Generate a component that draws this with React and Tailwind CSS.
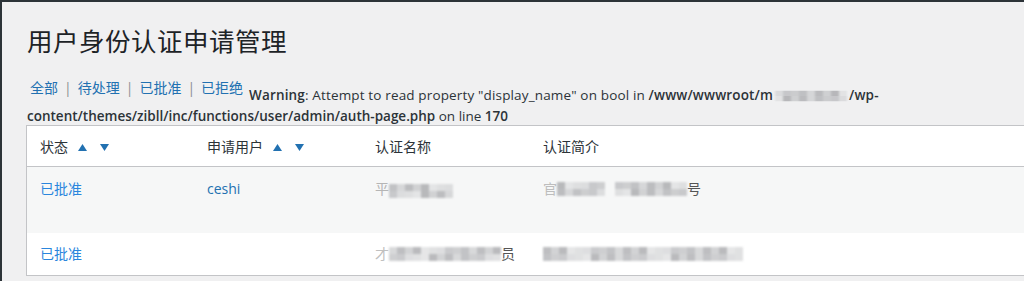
import React from "react";

const shades = [
  "bg-[#c8c9cb]", "bg-[#b4b5b8]", "bg-[#d6d7d9]", "bg-[#a9aaad]", "bg-[#cfd0d2]",
  "bg-[#bdbec1]", "bg-[#e0e1e2]", "bg-[#aeafb2]", "bg-[#c3c4c6]", "bg-[#d9dadb]",
];

function Mosaic({ n, seed = 0, className = "" }) {
  const cells = [];
  for (let i = 0; i < n; i++) {
    const top = shades[(i * 3 + seed) % shades.length];
    const bot = shades[(i * 7 + seed + 4) % shades.length];
    cells.push(
      <div key={i} className="flex flex-col">
        <div className={"w-[8px] h-[7px] " + top} />
        <div className={"w-[8px] h-[7px] " + bot} />
      </div>
    );
  }
  return <div className={"flex opacity-80 blur-[1px] " + className}>{cells}</div>;
}

function SortArrows() {
  return (
    <span className="inline-flex items-center gap-[13px] ml-[10px] text-[#2271b1]">
      <svg width="9" height="7" viewBox="0 0 9 7"><path d="M4.5 0L9 7H0z" fill="currentColor" /></svg>
      <svg width="9" height="7" viewBox="0 0 9 7"><path d="M0 0H9L4.5 7z" fill="currentColor" /></svg>
    </span>
  );
}

export default function App() {
  const cjk = "font-['Open_Sans','Noto_Sans_CJK_SC',sans-serif]";
  return (
    <div className={"w-[1024px] h-[281px] overflow-hidden bg-[#f0f0f1] border-t-[2px] border-l-[2px] border-[#2c3338] " + cjk}>
      <div className="pl-[24px]">
        <h1 className="pl-[1px] pt-[21px] text-[25.5px] leading-[36px] text-[#1d2327] font-normal tracking-[0.5px]">
          用户身份认证申请管理
        </h1>
        <div className="pl-[1px] pt-[26px] text-[13.5px] leading-[21px] text-[#2c3338] w-[1100px]">
          <div className="float-left -mt-[7px] h-[28px] pl-[3px] mr-[6px] text-[14px] leading-[20px] text-[#2271b1] flex items-start">
            <span>全部</span>
            <span className="mx-[6px] text-[#8c8f94]">|</span>
            <span>待处理</span>
            <span className="mx-[6px] text-[#8c8f94]">|</span>
            <span>已批准</span>
            <span className="mx-[6px] text-[#8c8f94]">|</span>
            <span>已拒绝</span>
          </div>
          <span className="tracking-[0.15px]">
            <span className="font-semibold">Warning</span>: Attempt to read property "display_name" on bool in{" "}
            <span className="font-semibold">
              /www/wwwroot/m
              <span className="inline-flex align-middle mx-[2px]">
                <Mosaic n={9} seed={2} className="scale-y-75" />
              </span>
              /wp-
            </span>
          </span>
          <br />
          <span className="font-semibold">content/themes/zibll/inc/functions/user/admin/auth-page.php</span> on line{" "}
          <span className="font-semibold">170</span>
        </div>
        <div className="clear-both" />
        <div className="-mt-[2px] w-[1010px] bg-white border border-[#c3c4c7] text-[14px] leading-[20px]">
          <div className="grid grid-cols-[167px_168px_168px_1fr] h-[41px] pt-[11px] border-b border-[#c3c4c7] text-[#2c3338]">
            <div className="pl-[13px] flex items-start">
              <span>状态</span>
              <span className="pt-[7px] flex"><SortArrows /></span>
            </div>
            <div className="pl-[13px] flex items-start">
              <span>申请用户</span>
              <span className="pt-[7px] flex"><SortArrows /></span>
            </div>
            <div className="pl-[13px]">认证名称</div>
            <div className="pl-[13px]">认证简介</div>
          </div>
          <div className="grid grid-cols-[167px_168px_168px_1fr] h-[66px] pt-[12px] bg-[#f6f7f7] text-[#2c3338]">
            <div className="pl-[13px] text-[#2a86dd]">已批准</div>
            <div className="pl-[13px] text-[#2271b1]">ceshi</div>
            <div className="pl-[13px] flex items-center h-[20px]">
              <span className="text-[#b5b5b5]">平</span>
              <Mosaic n={8} seed={1} className="mt-[4px]" />
            </div>
            <div className="pl-[13px] flex items-center h-[20px]">
              <span className="text-[#bdbdbd]">官</span>
              <Mosaic n={6} seed={3} />
              <div className="w-[10px]" />
              <Mosaic n={9} seed={5} />
              <span className="text-[#555]">号</span>
            </div>
          </div>
          <div className="grid grid-cols-[167px_168px_168px_1fr] h-[42px] pt-[11px] text-[#2c3338]">
            <div className="pl-[13px] text-[#2a86dd]">已批准</div>
            <div className="pl-[13px]" />
            <div className="pl-[13px] flex items-center h-[20px]">
              <span className="text-[#c0c0c0]">才</span>
              <Mosaic n={14} seed={4} />
              <span className="text-[#555]">员</span>
            </div>
            <div className="pl-[13px] flex items-center h-[20px]">
              <Mosaic n={25} seed={7} />
            </div>
          </div>
        </div>
      </div>
    </div>
  );
}
